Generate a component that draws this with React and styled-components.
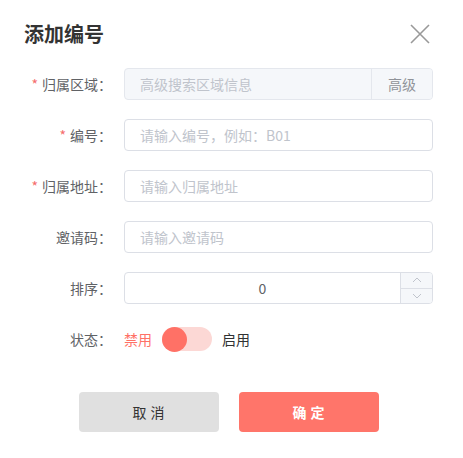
import React from "react";
import styled, { createGlobalStyle } from "styled-components";

const Global = createGlobalStyle`
  html, body { margin: 0; padding: 0; background: #fff; }
  body { font-family: "Noto Sans CJK SC", "Noto Sans", sans-serif; }
  * { box-sizing: border-box; }
`;

const Dialog = styled.div`
  width: 463px;
  height: 458px;
  background: #fff;
  padding: 20px 30px 0 24px;
`;

const Header = styled.div`
  display: flex;
  align-items: center;
  justify-content: space-between;
  height: 28px;
`;

const Title = styled.h2`
  margin: 0;
  font-size: 20px;
  line-height: 28px;
  font-weight: 700;
  color: #333;
`;

const CloseBtn = styled.button`
  border: 0;
  background: transparent;
  padding: 0;
  margin-right: 3px;
  width: 20px;
  height: 20px;
  display: flex;
  align-items: center;
  justify-content: center;
  cursor: pointer;
`;

const Form = styled.div`
  margin-top: 20px;
  display: flex;
  flex-direction: column;
  gap: 19px;
`;

const Item = styled.div`
  display: flex;
  align-items: center;
  height: 32px;
`;

const Label = styled.label`
  width: 100px;
  padding-right: 12px;
  text-align: right;
  font-size: 14px;
  color: #606266;
  line-height: 32px;
  white-space: nowrap;
`;

const Star = styled.span`
  color: #f56c6c;
  margin-right: 4px;
`;

const Field = styled.div`
  flex: 1;
  display: flex;
  height: 32px;
  border: 1px solid ${(p) => (p.$disabled ? "#e4e7ed" : "#dcdfe6")};
  border-radius: 4px;
  background: ${(p) => (p.$disabled ? "#f5f7fa" : "#fff")};
  overflow: hidden;
`;

const Input = styled.input`
  flex: 1;
  min-width: 0;
  border: 0;
  outline: none;
  background: transparent;
  padding: 0 15px;
  font-family: inherit;
  font-size: 14px;
  color: #606266;
  text-align: ${(p) => (p.$center ? "center" : "left")};
  &::placeholder { color: #c0c4cc; }
`;

const Append = styled.div`
  width: 61px;
  display: flex;
  align-items: center;
  justify-content: center;
  border-left: 1px solid #e4e7ed;
  background: #f5f7fa;
  color: #909399;
  font-size: 14px;
`;

const Steppers = styled.div`
  width: 32px;
  display: flex;
  flex-direction: column;
  border-left: 1px solid #dcdfe6;
  background: #f5f7fa;
`;

const Step = styled.div`
  flex: 1;
  display: flex;
  align-items: center;
  justify-content: center;
  border-top: ${(p) => (p.$bottom ? "1px solid #dcdfe6" : "0")};
`;

const SwitchRow = styled.div`
  display: flex;
  align-items: center;
  gap: 10px;
  font-size: 14px;
`;

const SwitchText = styled.span`
  color: ${(p) => (p.$active ? "#ff7166" : "#303133")};
`;

const Track = styled.div`
  width: 50px;
  height: 24px;
  border-radius: 12px;
  background: #fcd8d5;
  display: flex;
  align-items: center;
`;

const Knob = styled.div`
  width: 25px;
  height: 25px;
  border-radius: 50%;
  background: #ff7166;
`;

const Footer = styled.div`
  display: flex;
  justify-content: center;
  gap: 20px;
  margin-top: 37px;
`;

const Button = styled.button`
  width: 140px;
  height: 40px;
  border: 0;
  border-radius: 4px;
  font-family: inherit;
  font-size: 14px;
  letter-spacing: 4px;
  text-indent: 4px;
  font-weight: ${(p) => (p.$primary ? 600 : 400)};
  background: ${(p) => (p.$primary ? "#ff756a" : "#e0e0e0")};
  color: ${(p) => (p.$primary ? "#fff" : "#333")};
  cursor: pointer;
`;

const Chevron = ({ up }) => (
  <svg width="10" height="6" viewBox="0 0 10 6">
    <polyline
      points={up ? "1,5 5,1 9,5" : "1,1 5,5 9,1"}
      fill="none"
      stroke="#c0c4cc"
      strokeWidth="1"
    />
  </svg>
);

export default function App() {
  return (
    <>
      <Global />
      <Dialog>
        <Header>
          <Title>添加编号</Title>
          <CloseBtn aria-label="close">
            <svg width="20" height="20" viewBox="0 0 20 20">
              <path d="M1 1 L19 19 M19 1 L1 19" stroke="#999" strokeWidth="1.6" fill="none" />
            </svg>
          </CloseBtn>
        </Header>
        <Form>
          <Item>
            <Label><Star>*</Star>归属区域：</Label>
            <Field $disabled>
              <Input placeholder="高级搜索区域信息" disabled />
              <Append>高级</Append>
            </Field>
          </Item>
          <Item>
            <Label><Star>*</Star>编号：</Label>
            <Field>
              <Input placeholder="请输入编号，例如：B01" />
            </Field>
          </Item>
          <Item>
            <Label><Star>*</Star>归属地址：</Label>
            <Field>
              <Input placeholder="请输入归属地址" />
            </Field>
          </Item>
          <Item>
            <Label>邀请码：</Label>
            <Field>
              <Input placeholder="请输入邀请码" />
            </Field>
          </Item>
          <Item>
            <Label>排序：</Label>
            <Field>
              <Input $center defaultValue="0" />
              <Steppers>
                <Step><Chevron up /></Step>
                <Step $bottom><Chevron /></Step>
              </Steppers>
            </Field>
          </Item>
          <Item>
            <Label>状态：</Label>
            <SwitchRow>
              <SwitchText $active>禁用</SwitchText>
              <Track><Knob /></Track>
              <SwitchText>启用</SwitchText>
            </SwitchRow>
          </Item>
        </Form>
        <Footer>
          <Button>取消</Button>
          <Button $primary>确定</Button>
        </Footer>
      </Dialog>
    </>
  );
}
